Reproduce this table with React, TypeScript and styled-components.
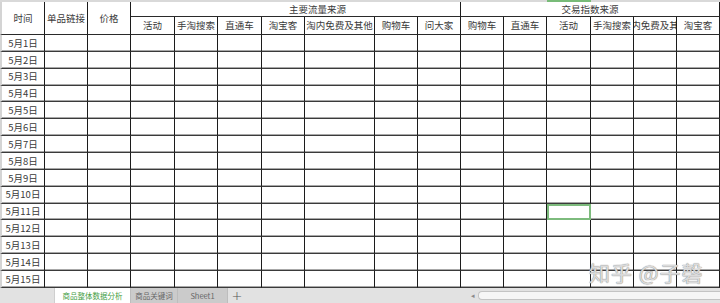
import { FC } from 'react'
import styled, { createGlobalStyle } from 'styled-components'

const GlobalStyle = createGlobalStyle`
  html, body {
    margin: 0;
    padding: 0;
    background: #fff;
  }
  body {
    width: 720px;
    height: 303px;
    overflow: hidden;
    font-family: "Noto Sans CJK SC", "Noto Sans", sans-serif;
  }
`

const COLS = [45, 43, 43, 44, 43, 44, 43, 70, 43, 43, 43, 43, 44, 43, 43, 43]
const SELECTED_COL = 12
const SELECTED_ROW = 10

const SUB_HEADERS = [
  '活动',
  '手淘搜索',
  '直通车',
  '淘宝客',
  '淘内免费及其他',
  '购物车',
  '问大家',
  '购物车',
  '直通车',
  '活动',
  '手淘搜索',
  '淘内免费及其他',
  '淘宝客',
]

const DATES = Array.from({ length: 15 }, (_, i) => `5月${i + 1}日`)

const Page = styled.div`
  position: relative;
  width: 720px;
  height: 303px;
  display: flex;
  flex-direction: column;
  overflow: hidden;
`

const Sheet = styled.div<{ $cols: string }>`
  display: grid;
  grid-template-columns: ${(p) => p.$cols};
  grid-template-rows: 2px 15px 18px repeat(15, 16.87px);
  height: 288px;
  overflow: hidden;
  color: #3a3a3a;
  font-size: 9.5px;
  line-height: 1;
`

const ColumnEdge = styled.div<{ $active?: boolean }>`
  background: ${(p) => (p.$active ? '#78bb78' : '#d9d9d9')};
`

const Cell = styled.div<{ $selected?: boolean }>`
  box-sizing: border-box;
  display: flex;
  align-items: center;
  justify-content: center;
  white-space: nowrap;
  overflow: hidden;
  border-right: 1px solid #1c1c1c;
  border-bottom: 1px solid #3a3a3a;
  box-shadow: inset 0 -1px 0 #a8a8a8;
  outline: ${(p) => (p.$selected ? '2px solid #7dbb7d' : 'none')};
  outline-offset: -2px;
`

const HeadCell = styled(Cell)<{ $rows?: number; $span?: number; $shift?: number; $edge?: boolean }>`
  grid-row: span ${(p) => p.$rows || 1};
  grid-column: span ${(p) => p.$span || 1};
  padding-left: ${(p) => p.$shift || 0}px;
  padding-top: 1px;
  box-shadow: none;
  border-bottom-color: #2a2a2a;
  border-left: ${(p) => (p.$edge ? '2px solid #d4d4d4' : 'none')};
`

const DateCell = styled(Cell)`
  border-left: 2px solid #d4d4d4;
  padding-top: 1px;
`

const TabBar = styled.div`
  flex: 1;
  display: flex;
  align-items: stretch;
  background: #e2e2e2;
  font-size: 7.5px;
  line-height: 1;
`

const TabSpacer = styled.div`
  width: 55px;
  border-right: 1px solid #cfcfcf;
  box-sizing: border-box;
`

const Tab = styled.div<{ $active?: boolean; $width: number }>`
  width: ${(p) => p.$width}px;
  display: flex;
  align-items: center;
  justify-content: center;
  background: ${(p) => (p.$active ? '#ffffff' : '#cbcbcb')};
  color: ${(p) => (p.$active ? '#45a045' : '#666')};
  border-right: 1px solid #bdbdbd;
  box-sizing: border-box;
`

const AddTab = styled.div`
  width: 18px;
  display: flex;
  align-items: center;
  justify-content: center;
  color: #555;
  font-size: 13px;
  font-family: "DejaVu Sans", sans-serif;
  font-weight: 300;
`

const Filler = styled.div`
  flex: 1;
`

const ScrollArrows = styled.div`
  width: 22px;
  display: flex;
  align-items: center;
  justify-content: flex-end;
  padding-right: 3px;
  color: #8a8a8a;
  font-size: 7px;
`

const ScrollTrack = styled.div`
  width: 242px;
  display: flex;
  align-items: center;
`

const ScrollThumb = styled.div`
  width: 100%;
  height: 7px;
  background: #f6f6f6;
  border: 1px solid #c4c4c4;
  border-right: none;
  border-radius: 4px 0 0 4px;
`

const Watermark = styled.div`
  position: absolute;
  left: 589px;
  top: 257px;
  font-size: 21px;
  font-weight: 400;
  letter-spacing: 1px;
  color: rgba(255, 255, 255, 0.7);
  text-shadow: 0 0 1px #8a8a8a, 0 0 1px #8a8a8a;
  white-space: nowrap;
  pointer-events: none;
`

const App: FC = () => {
  const cols = COLS.map((w) => `${w}px`).join(' ')
  return (
    <Page>
      <GlobalStyle />
      <Sheet $cols={cols}>
        {COLS.map((_, i) => (
          <ColumnEdge key={`edge${i}`} $active={i === SELECTED_COL} />
        ))}

        <HeadCell $rows={2} $edge>
          时间
        </HeadCell>
        <HeadCell $rows={2}>单品链接</HeadCell>
        <HeadCell $rows={2}>价格</HeadCell>
        <HeadCell $span={7} $shift={44}>
          主要流量来源
        </HeadCell>
        <HeadCell $span={6}>交易指数来源</HeadCell>
        {SUB_HEADERS.map((item, index) => {
          const key = `${item}${index}`
          return <HeadCell key={key}>{item}</HeadCell>
        })}

        {DATES.map((date, row) => (
          <Row key={date} date={date} selected={row === SELECTED_ROW ? SELECTED_COL : -1} />
        ))}
      </Sheet>

      <TabBar>
        <TabSpacer />
        <Tab $active $width={76}>
          商品整体数据分析
        </Tab>
        <Tab $width={47}>商品关键词</Tab>
        <Tab $width={50}>Sheet1</Tab>
        <AddTab>+</AddTab>
        <Filler />
        <ScrollArrows>◂</ScrollArrows>
        <ScrollTrack>
          <ScrollThumb />
        </ScrollTrack>
      </TabBar>

      <Watermark>知乎 @子磬</Watermark>
    </Page>
  )
}

type TRow = {
  date: string
  selected: number
}

const Row: FC<TRow> = ({ date, selected }) => {
  return (
    <>
      <DateCell>{date}</DateCell>
      {COLS.slice(1).map((_, i) => (
        <Cell key={`${date}${i}`} $selected={i + 1 === selected} />
      ))}
    </>
  )
}

export default App
